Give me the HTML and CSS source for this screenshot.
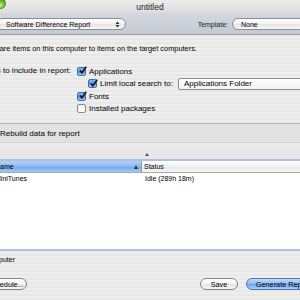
FILE: index.html
```html
<!DOCTYPE html>
<html>
<head>
<meta charset="utf-8">
<link rel="stylesheet" href="styles.css">
</head>
<body>
<div class="window">
  <div class="titlebar">
    <span class="zoom-btn"></span>
    <span class="title">untitled</span>
  </div>
  <div class="toolbar">
    <div class="popup report">
      <span>Software Difference Report</span>
      <svg class="arrows" width="5" height="7" viewBox="0 0 5 7"><path d="M0.5 3 L2.5 0.5 L4.5 3 Z M0.5 4 L2.5 6.5 L4.5 4 Z" fill="#333"/></svg>
    </div>
    <div class="template">
      <span class="tpl-label">Template:</span>
      <div class="popup none"><span>None</span></div>
    </div>
  </div>
  <div class="content">
    <p class="intro">Compare items on this computer to items on the target computers.</p>
    <div class="include">
      <div class="inc-label">Items to include in report:</div>
      <div class="opt">
        <span class="cb checked"><svg width="9" height="9" viewBox="0 0 9 9"><path d="M2 4.3 L3.8 7 L8.2 0.8" fill="none" stroke="#111" stroke-width="1.5"/></svg></span>
        <span>Applications</span>
      </div>
      <div class="opt sub">
        <span class="cb checked"><svg width="9" height="9" viewBox="0 0 9 9"><path d="M2 4.3 L3.8 7 L8.2 0.8" fill="none" stroke="#111" stroke-width="1.5"/></svg></span>
        <span>Limit local search to:</span>
        <div class="combo">Applications Folder</div>
      </div>
      <div class="opt">
        <span class="cb checked"><svg width="9" height="9" viewBox="0 0 9 9"><path d="M2 4.3 L3.8 7 L8.2 0.8" fill="none" stroke="#111" stroke-width="1.5"/></svg></span>
        <span>Fonts</span>
      </div>
      <div class="opt">
        <span class="cb"></span>
        <span>Installed packages</span>
      </div>
    </div>
  </div>
  <div class="rebuild"><span>Rebuild data for report</span></div>
  <div class="splitter"><span class="tri"></span></div>
  <div class="table">
    <div class="thead">
      <div class="th name sorted"><span>Name</span><span class="sort-arrow"></span></div>
      <div class="th status"><span>Status</span></div>
    </div>
    <div class="tbody">
      <div class="tr">
        <div class="td name">MiniTunes</div>
        <div class="td status">Idle (289h 18m)</div>
      </div>
    </div>
  </div>
  <div class="bottom">
    <div class="stat-text">1 computer</div>
    <div class="buttons">
      <div class="btn schedule">Schedule...</div>
      <div class="btn save">Save</div>
      <div class="btn default generate">Generate Report</div>
    </div>
  </div>
</div>
</body>
</html>
```
FILE: styles.css
```css
html, body {
  margin: 0;
  padding: 0;
}
body {
  width: 300px;
  height: 300px;
  overflow: hidden;
  font-family: "Liberation Sans", Arial, sans-serif;
  color: #000;
}
.window {
  width: 300px;
  height: 300px;
  overflow: hidden;
  display: flex;
  flex-direction: column;
  background: repeating-linear-gradient(to bottom, #eeeeee 0, #eeeeee 2px, #e8e8e8 2px, #e8e8e8 4px);
}
.titlebar {
  position: relative;
  height: 13px;
  flex: none;
  display: flex;
  align-items: center;
  justify-content: center;
  background: linear-gradient(#ececec, #dcdcdc);
}
.zoom-btn {
  position: absolute;
  left: -5px;
  top: -2px;
  width: 9px;
  height: 9px;
  border-radius: 50%;
  background: radial-gradient(circle at 50% 70%, #c8f07a, #5fb32a 60%, #3d7f1b);
  border: 1px solid #4b7d2a;
}
.title {
  font-size: 8.5px;
  color: #222;
}
.toolbar {
  height: 20px;
  flex: none;
  border-bottom: 1px solid #9a9ea4;
  background: linear-gradient(#d3d8df, #c4cad2);
  display: flex;
  align-items: center;
  justify-content: space-between;
  padding-top: 1px;
  box-sizing: content-box;
}
.popup {
  height: 10px;
  border: 1px solid #8a8d92;
  border-radius: 6px;
  background: linear-gradient(#ffffff, #f1f1f1 50%, #e4e4e4 51%, #f7f7f7);
  font-size: 7px;
  display: flex;
  align-items: center;
  box-sizing: content-box;
}
.popup.report {
  width: 130px;
  margin-left: -4px;
  padding-left: 9px;
  padding-right: 3px;
  justify-content: space-between;
  box-sizing: border-box;
  height: 12px;
}
.arrows {
  margin-right: 2px;
}
.template {
  display: flex;
  align-items: center;
  gap: 4px;
  margin-right: -28px;
}
.tpl-label {
  font-size: 7px;
  color: #222;
}
.popup.none {
  width: 96px;
  height: 12px;
  box-sizing: border-box;
  padding-left: 8px;
}
.content {
  height: 88px;
  flex: none;
  box-sizing: border-box;
  padding-top: 8px;
}
.intro {
  margin: 0 0 0 -20px;
  font-size: 7.4px;
  line-height: 12px;
  white-space: nowrap;
}
.include {
  margin-top: 10px;
  margin-left: -30px;
  display: grid;
  grid-template-columns: 101px 1fr;
  grid-template-rows: 12px 13px 12px 12px;
  column-gap: 6px;
  font-size: 8px;
}
.inc-label {
  text-align: right;
  line-height: 12px;
  white-space: nowrap;
}
.opt {
  grid-column: 2;
  display: flex;
  align-items: center;
  gap: 3px;
  white-space: nowrap;
}
.opt.sub {
  padding-left: 11px;
}
.cb {
  width: 9px;
  height: 9px;
  box-sizing: border-box;
  flex: none;
  border: 1px solid #888;
  border-radius: 2px;
  background: linear-gradient(#f4f4f4, #ffffff);
  display: flex;
  align-items: center;
  justify-content: center;
}
.cb.checked {
  border-color: #3f6fb0;
  background: linear-gradient(#8ab9f0, #4b8fe4 55%, #a9d1fa);
}
.cb svg {
  margin: -1px -1px 0 0;
  overflow: visible;
}
.combo {
  margin-left: 2px;
  width: 140px;
  height: 12px;
  box-sizing: border-box;
  border: 1px solid #8e8e8e;
  border-radius: 2px;
  background: linear-gradient(#ffffff, #f3f3f3);
  padding-left: 5px;
  line-height: 10px;
  font-size: 8px;
  flex: none;
}
.rebuild {
  height: 18px;
  flex: none;
  border-top: 1px solid #b9b9b9;
  background: #e2e2e2;
  font-size: 8px;
  display: flex;
  align-items: center;
  white-space: nowrap;
}
.splitter {
  height: 17px;
  flex: none;
  border-top: 1px solid #d6d6d6;
  box-sizing: border-box;
  background: linear-gradient(#ececec, #e6e6e6);
  display: flex;
  align-items: flex-end;
  padding-bottom: 3px;
}
.tri {
  margin-left: 145px;
  width: 0;
  height: 0;
  border-left: 2px solid transparent;
  border-right: 2px solid transparent;
  border-bottom: 3px solid #555;
}
.table {
  height: 92px;
  flex: none;
  box-sizing: border-box;
  margin: 0 -10px;
  border: 2px solid #a9c3e3;
  background: #fff;
  font-size: 7px;
  display: flex;
  flex-direction: column;
}
.thead {
  height: 12px;
  flex: none;
  display: flex;
  border-bottom: 1px solid #a7a7a7;
  box-sizing: border-box;
}
.th {
  display: flex;
  align-items: center;
  box-sizing: border-box;
}
.th.name {
  width: 150px;
  padding-left: 3px;
  justify-content: space-between;
  border-right: 1px solid #9a9a9a;
  padding-right: 3px;
}
.th.sorted {
  background: linear-gradient(#b4d1f5, #8cb8ef 50%, #6fa3ea 51%, #a4ccf7);
}
.sort-arrow {
  width: 0;
  height: 0;
  border-left: 2.5px solid transparent;
  border-right: 2.5px solid transparent;
  border-bottom: 4px solid #333;
}
.th.status {
  flex: 1;
  padding-left: 2px;
  background: linear-gradient(#ffffff, #f2f2f2 50%, #e6e6e6 51%, #f5f5f5);
}
.tbody {
  flex: 1;
}
.tr {
  display: flex;
  height: 9px;
  line-height: 9px;
  margin-top: 1px;
  white-space: nowrap;
  color: #000;
}
.td.name {
  width: 150px;
  padding-left: 3px;
  box-sizing: border-box;
}
.td.status {
  padding-left: 3px;
}
.bottom {
  flex: 1;
  padding-top: 5px;
  box-sizing: border-box;
}
.stat-text {
  margin-left: -20px;
  font-size: 7px;
  line-height: 8px;
}
.buttons {
  margin-top: 14px;
  margin-left: -24px;
  width: 352px;
  box-sizing: border-box;
  padding-right: 8px;
  display: flex;
  gap: 8px;
}
.btn {
  height: 12px;
  box-sizing: border-box;
  border: 1px solid #858585;
  border-radius: 7px;
  background: linear-gradient(#ffffff, #f3f3f3 50%, #e2e2e2 51%, #f8f8f8);
  font-size: 7.3px;
  display: flex;
  align-items: center;
  justify-content: center;
  white-space: nowrap;
  flex: none;
}
.btn.schedule {
  width: 51px;
  padding-left: 8px;
}
.btn.save {
  width: 38px;
  margin-left: auto;
}
.btn.generate {
  width: 74px;
  border-color: #4d73a8;
  background: linear-gradient(#c2dcfa, #8dbaf0 50%, #6aa3ec 51%, #a8d4fc);
}
```
